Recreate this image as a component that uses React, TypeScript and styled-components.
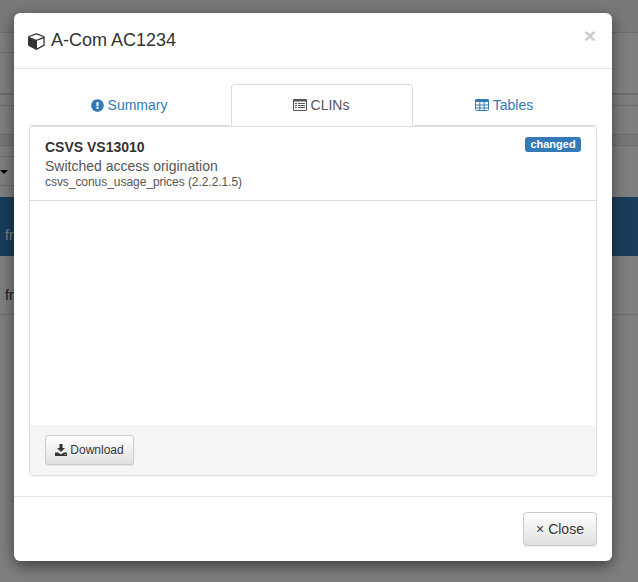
import React from "react";
import styled, { createGlobalStyle } from "styled-components";
import { FaExclamationCircle } from "react-icons/fa";

const Global = createGlobalStyle`
  html, body { margin: 0; padding: 0; height: 100%; background: #fff; }
  #root { height: 100%; }
  body { font-family: "Liberation Sans", Arial, sans-serif; font-size: 14px; color: #333; overflow: hidden; }
  * { box-sizing: border-box; }
`;

const Page = styled.div`
  position: relative;
  width: 638px;
  height: 582px;
  overflow: hidden;
  background: #fff;
`;

const BgLine = styled.div<{ $h: number; $short?: boolean; $bg?: string; $thick?: boolean }>`
  height: ${(p) => p.$h}px;
  width: ${(p) => (p.$short ? "200px" : "100%")};
  background: ${(p) => p.$bg || "transparent"};
  border-bottom: ${(p) => (p.$thick ? 2 : 1)}px solid #ddd;
  display: flex;
  align-items: center;
`;

const Caret = styled.span`
  width: 0;
  height: 0;
  margin-left: 0;
  border-top: 4px solid #000;
  border-left: 4px solid transparent;
  border-right: 4px solid transparent;
  margin-top: 2px;
`;

const BgGap = styled.div`
  height: 11px;
`;

const BgBanner = styled.div`
  height: 59px;
  background: #337ab7;
  color: #fff;
  padding: 30px 0 0 5px;
`;

const BgRow = styled.div`
  height: 59px;
  padding: 31px 0 0 5px;
  border-bottom: 1px solid #ddd;
`;

const Backdrop = styled.div`
  position: absolute;
  inset: 0;
  background: rgba(0, 0, 0, 0.5);
`;

const Modal = styled.div`
  position: absolute;
  left: 14px;
  top: 13px;
  width: 598px;
  height: 548px;
  background: #fff;
  border-radius: 6px;
  box-shadow: 0 5px 15px rgba(0, 0, 0, 0.5);
  display: flex;
  flex-direction: column;
`;

const Header = styled.div`
  height: 56px;
  flex: none;
  border-bottom: 1px solid #e5e5e5;
  padding: 15px 15px 15px 14px;
  display: flex;
  align-items: flex-start;
  justify-content: space-between;
`;

const Title = styled.h4`
  margin: 0;
  font-size: 18px;
  font-weight: 500;
  line-height: 25px;
  display: flex;
  align-items: center;
  gap: 5px;
`;

const X = styled.span`
  font-size: 21px;
  font-weight: 700;
  line-height: 1;
  color: #000;
  opacity: 0.2;
  margin-top: -3px;
  margin-right: 1px;
`;

const Body = styled.div`
  flex: 1;
  padding: 15px 15px 20px;
  display: flex;
  flex-direction: column;
`;

const Tabs = styled.div`
  display: flex;
  height: 42px;
  flex: none;
`;

const Tab = styled.div<{ $active?: boolean; $w: number }>`
  width: ${(p) => p.$w}px;
  flex: none;
  display: flex;
  align-items: center;
  justify-content: center;
  gap: 4px;
  padding-right: 2px;
  color: ${(p) => (p.$active ? "#555" : "#337ab7")};
  background: #fff;
  border: 1px solid ${(p) => (p.$active ? "#ddd" : "transparent")};
  border-bottom: ${(p) => (p.$active ? "1px solid #fff" : "1px solid #ddd")};
  border-radius: 4px 4px 0 0;
`;

const Panel = styled.div`
  flex: 1;
  border: 1px solid #ddd;
  border-radius: 4px;
  box-shadow: 0 1px 1px rgba(0, 0, 0, 0.05);
  display: flex;
  flex-direction: column;
`;

const Item = styled.div`
  height: 74px;
  flex: none;
  padding: 10px 15px;
  border-bottom: 1px solid #ddd;
  position: relative;
`;

const ItemName = styled.div`
  font-weight: 700;
  line-height: 20px;
`;

const ItemDesc = styled.div`
  color: #555;
  line-height: 18px;
`;

const ItemSub = styled.div`
  color: #555;
  font-size: 12px;
  line-height: 13px;
  margin-top: 1px;
  letter-spacing: -0.05px;
`;

const Badge = styled.span`
  position: absolute;
  right: 15px;
  top: 10px;
  width: 56px;
  height: 15px;
  text-align: center;
  background: #337ab7;
  color: #fff;
  font-size: 11px;
  font-weight: 700;
  line-height: 15px;
  border-radius: 3px;
`;

const Spacer = styled.div`
  flex: 1;
`;

const PanelFoot = styled.div`
  height: 50px;
  flex: none;
  background: #f5f5f5;
  padding: 10px 15px;
  border-radius: 0 0 3px 3px;
`;

const Btn = styled.button<{ $size: "sm" | "md" }>`
  font-family: inherit;
  color: #333;
  border: 1px solid #ccc;
  border-radius: ${(p) => (p.$size === "sm" ? 3 : 4)}px;
  background: linear-gradient(to bottom, #fff 0, #e0e0e0 100%);
  box-shadow: inset 0 1px 0 rgba(255, 255, 255, 0.15), 0 1px 1px rgba(0, 0, 0, 0.075);
  text-shadow: 0 1px 0 #fff;
  display: inline-flex;
  align-items: center;
  justify-content: center;
  gap: 3px;
  padding: 0;
  width: ${(p) => (p.$size === "sm" ? 89 : 74)}px;
  height: ${(p) => (p.$size === "sm" ? 30 : 34)}px;
  font-size: ${(p) => (p.$size === "sm" ? 12 : 14)}px;
`;

const Footer = styled.div`
  height: 65px;
  flex: none;
  border-top: 1px solid #e5e5e5;
  padding: 15px;
  display: flex;
  justify-content: flex-end;
`;

const CubeIcon = () => (
  <svg width="18" height="18" viewBox="0 0 1792 1792" fill="currentColor">
    <path d="M896 1629l640-349v-636l-640 233v752zm-64-865l698-254-698-254-698 254zm832-252v768q0 35-18 65t-49 47l-704 384q-28 16-61 16t-61-16l-704-384q-31-17-49-47t-18-65v-768q0-40 23-73t61-47l704-256q22-8 44-8t44 8l704 256q38 14 61 47t23 73z" />
  </svg>
);

const ListIcon = () => (
  <svg width="14" height="12" viewBox="0 0 14 12" fill="currentColor">
    <path fillRule="evenodd" d="M1 0h12a1 1 0 0 1 1 1v10a1 1 0 0 1-1 1H1a1 1 0 0 1-1-1V1a1 1 0 0 1 1-1zm0 2.500V10.500a.5.5 0 0 0 .5.5h11a.5.5 0 0 0 .5-.5V2.500z" />
    <path d="M2 4h2v1H2zM5 4h7v1H5zM2 6h2v1H2zM5 6h7v1H5zM2 8h2v1H2zM5 8h7v1H5z" />
  </svg>
);

const TableIcon = () => (
  <svg width="14" height="12" viewBox="0 0 14 12" fill="none" stroke="currentColor" strokeWidth="1">
    <rect x="0.5" y="0.5" width="13" height="11" rx="1" />
    <path d="M0 1.750h14" strokeWidth="2.500" />
    <path d="M0 6h14M0 9h14M4.830 3v9M9.170 3v9" />
  </svg>
);

const DownloadIcon = () => (
  <svg width="12" height="12" viewBox="0 0 12 12" fill="currentColor">
    <path d="M4.500 0h3v4H10L6 8 2 4h2.500z" />
    <path fillRule="evenodd" d="M0 8.500h3.200L6 10.500l2.800-2h3.200V12H0zM9.800 10v1h1v-1z" />
  </svg>
);

export default function App() {
  return (
    <Page>
      <Global />
      <BgLine $h={33} $bg="#f2f2f2" />
      <BgLine $h={20} $short />
      <BgLine $h={42} $thick />
      <BgLine $h={11} />
      <BgLine $h={29} />
      <BgLine $h={11} $bg="#eee" />
      <BgLine $h={11} $short />
      <BgLine $h={29} $short>
        <Caret />
      </BgLine>
      <BgGap />
      <BgBanner>fr</BgBanner>
      <BgRow>fr</BgRow>
      <Backdrop />
      <Modal>
        <Header>
          <Title>
            <CubeIcon />
            A-Com AC1234
          </Title>
          <X>×</X>
        </Header>
        <Body>
          <Tabs>
            <Tab $w={202}>
              <FaExclamationCircle size={13} />
              Summary
            </Tab>
            <Tab $active $w={182}>
              <ListIcon />
              CLINs
            </Tab>
            <Tab $w={184}>
              <TableIcon />
              Tables
            </Tab>
          </Tabs>
          <Panel>
            <Item>
              <ItemName>CSVS VS13010</ItemName>
              <ItemDesc>Switched access origination</ItemDesc>
              <ItemSub>csvs_conus_usage_prices (2.2.2.1.5)</ItemSub>
              <Badge>changed</Badge>
            </Item>
            <Spacer />
            <PanelFoot>
              <Btn $size="sm">
                <DownloadIcon />
                Download
              </Btn>
            </PanelFoot>
          </Panel>
        </Body>
        <Footer>
          <Btn $size="md">× Close</Btn>
        </Footer>
      </Modal>
    </Page>
  );
}
